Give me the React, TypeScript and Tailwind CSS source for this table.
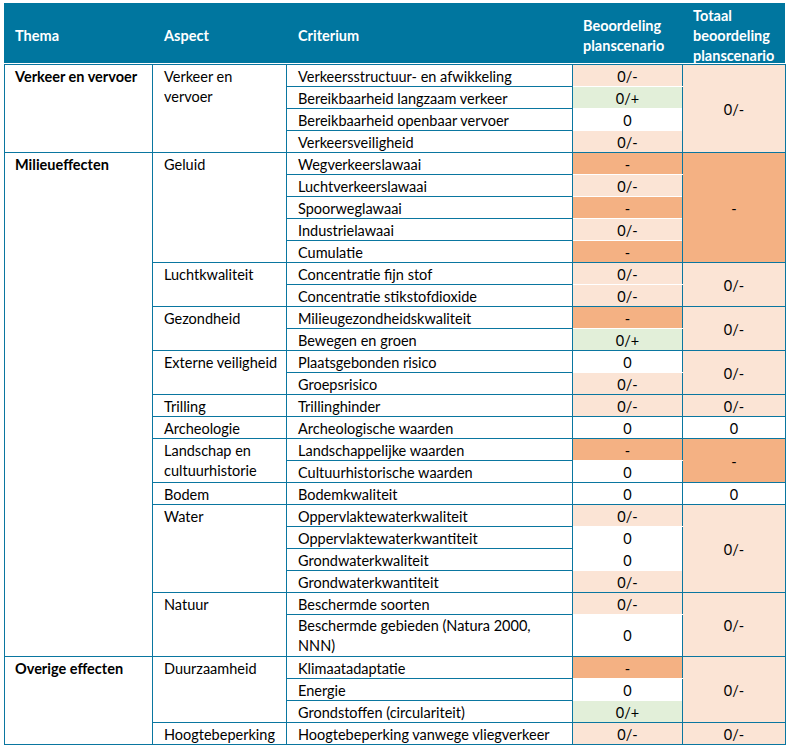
type Fill = "peach" | "orange" | "green" | "white";

type Crit = { name: React.ReactNode; score: string; fill: Fill; tall?: boolean };
type Aspect = { name: React.ReactNode; rows: Crit[]; total: string; totalFill: Fill };
type Theme = { name: string; aspects: Aspect[] };

const fillClass: Record<Fill, string> = {
  peach: "bg-[#fbe4d5]",
  orange: "bg-[#f4b183]",
  green: "bg-[#e2efd9]",
  white: "bg-white",
};

const data: Theme[] = [
  {
    name: "Verkeer en vervoer",
    aspects: [
      {
        name: (
          <>
            Verkeer en
            <br />
            vervoer
          </>
        ),
        total: "0/-",
        totalFill: "peach",
        rows: [
          { name: "Verkeersstructuur- en afwikkeling", score: "0/-", fill: "peach" },
          { name: "Bereikbaarheid langzaam verkeer", score: "0/+", fill: "green" },
          { name: "Bereikbaarheid openbaar vervoer", score: "0", fill: "white" },
          { name: "Verkeersveiligheid", score: "0/-", fill: "peach" },
        ],
      },
    ],
  },
  {
    name: "Milieueffecten",
    aspects: [
      {
        name: "Geluid",
        total: "-",
        totalFill: "orange",
        rows: [
          { name: "Wegverkeerslawaai", score: "-", fill: "orange" },
          { name: "Luchtverkeerslawaai", score: "0/-", fill: "peach" },
          { name: "Spoorweglawaai", score: "-", fill: "orange" },
          { name: "Industrielawaai", score: "0/-", fill: "peach" },
          { name: "Cumulatie", score: "-", fill: "orange" },
        ],
      },
      {
        name: "Luchtkwaliteit",
        total: "0/-",
        totalFill: "peach",
        rows: [
          { name: "Concentratie fijn stof", score: "0/-", fill: "peach" },
          { name: "Concentratie stikstofdioxide", score: "0/-", fill: "peach" },
        ],
      },
      {
        name: "Gezondheid",
        total: "0/-",
        totalFill: "peach",
        rows: [
          { name: "Milieugezondheidskwaliteit", score: "-", fill: "orange" },
          { name: "Bewegen en groen", score: "0/+", fill: "green" },
        ],
      },
      {
        name: "Externe veiligheid",
        total: "0/-",
        totalFill: "peach",
        rows: [
          { name: "Plaatsgebonden risico", score: "0", fill: "white" },
          { name: "Groepsrisico", score: "0/-", fill: "peach" },
        ],
      },
      {
        name: "Trilling",
        total: "0/-",
        totalFill: "peach",
        rows: [{ name: "Trillinghinder", score: "0/-", fill: "peach" }],
      },
      {
        name: "Archeologie",
        total: "0",
        totalFill: "white",
        rows: [{ name: "Archeologische waarden", score: "0", fill: "white" }],
      },
      {
        name: (
          <>
            Landschap en
            <br />
            cultuurhistorie
          </>
        ),
        total: "-",
        totalFill: "orange",
        rows: [
          { name: "Landschappelijke waarden", score: "-", fill: "orange" },
          { name: "Cultuurhistorische waarden", score: "0", fill: "white" },
        ],
      },
      {
        name: "Bodem",
        total: "0",
        totalFill: "white",
        rows: [{ name: "Bodemkwaliteit", score: "0", fill: "white" }],
      },
      {
        name: "Water",
        total: "0/-",
        totalFill: "peach",
        rows: [
          { name: "Oppervlaktewaterkwaliteit", score: "0/-", fill: "peach" },
          { name: "Oppervlaktewaterkwantiteit", score: "0", fill: "white" },
          { name: "Grondwaterkwaliteit", score: "0", fill: "white" },
          { name: "Grondwaterkwantiteit", score: "0/-", fill: "peach" },
        ],
      },
      {
        name: "Natuur",
        total: "0/-",
        totalFill: "peach",
        rows: [
          { name: "Beschermde soorten", score: "0/-", fill: "peach" },
          {
            name: (
              <>
                Beschermde gebieden (Natura 2000,
                <br />
                NNN)
              </>
            ),
            score: "0",
            fill: "white",
            tall: true,
          },
        ],
      },
    ],
  },
  {
    name: "Overige effecten",
    aspects: [
      {
        name: "Duurzaamheid",
        total: "0/-",
        totalFill: "peach",
        rows: [
          { name: "Klimaatadaptatie", score: "-", fill: "orange" },
          { name: "Energie", score: "0", fill: "white" },
          { name: "Grondstoffen (circulariteit)", score: "0/+", fill: "green" },
        ],
      },
      {
        name: "Hoogtebeperking",
        total: "0/-",
        totalFill: "peach",
        rows: [{ name: "Hoogtebeperking vanwege vliegverkeer", score: "0/-", fill: "peach" }],
      },
    ],
  },
];

const cell = "border border-[#0a76a0] px-[11px]";

export default function App() {
  return (
    <div className="bg-white w-[787px] h-[748px] pt-[3px] pl-[4px] font-['Lato',sans-serif] text-[14.5px] text-black">
      <div className="w-[781px] h-[60px] pt-[5px] mb-px flex items-center bg-[#00769f] text-white font-bold leading-[20px]">
        <div className="w-[148px] pl-[11px]">Thema</div>
        <div className="w-[134px] pl-[12px]">Aspect</div>
        <div className="w-[286px] pl-[12px]">Criterium</div>
        <div className="w-[110px] pl-[11px]">
          Beoordeling
          <br />
          planscenario
        </div>
        <div className="w-[103px] pl-[11px]">
          Totaal
          <br />
          beoordeling
          <br />
          planscenario
        </div>
      </div>
      <table className="w-[781px] table-fixed border-collapse">
        <colgroup>
          <col className="w-[148px]" />
          <col className="w-[134px]" />
          <col className="w-[286px]" />
          <col className="w-[110px]" />
          <col className="w-[103px]" />
        </colgroup>
        <tbody>
          {data.map((theme) => {
            const themeRows = theme.aspects.reduce((n, a) => n + a.rows.length, 0);
            return theme.aspects.map((aspect, ai) =>
              aspect.rows.map((row, ri) => {
                const last = ri === aspect.rows.length - 1;
                const lh = row.tall ? "pt-px leading-[20px]" : "pt-[2px] leading-[19px]";
                const aspectLh = aspect.rows.length > 1 ? "leading-[20px]" : "leading-[19px]";
                return (
                  <tr key={`${theme.name}-${ai}-${ri}`} className={row.tall ? "h-[42px]" : "h-[22px]"}>
                    {ai === 0 && ri === 0 && (
                      <td
                        rowSpan={themeRows}
                        className={`${cell} pt-[2px] pl-[10px] leading-[19px] align-top font-bold`}
                      >
                        {theme.name}
                      </td>
                    )}
                    {ri === 0 && (
                      <td
                        rowSpan={aspect.rows.length}
                        className={`${cell} pt-[2px] ${aspectLh} align-top whitespace-nowrap`}
                      >
                        {aspect.name}
                      </td>
                    )}
                    <td className={`${cell} ${lh} align-middle`}>{row.name}</td>
                    <td
                      className={`${cell} ${lh} align-middle text-center ${fillClass[row.fill]} ${
                        last ? "" : "border-b-white"
                      } ${ri > 0 ? "border-t-white" : ""}`}
                    >
                      {row.score}
                    </td>
                    {ri === 0 && (
                      <td
                        rowSpan={aspect.rows.length}
                        className={`${cell} pt-[2px] leading-[19px] align-middle text-center ${fillClass[aspect.totalFill]}`}
                      >
                        {aspect.total}
                      </td>
                    )}
                  </tr>
                );
              })
            );
          })}
        </tbody>
      </table>
    </div>
  );
}
